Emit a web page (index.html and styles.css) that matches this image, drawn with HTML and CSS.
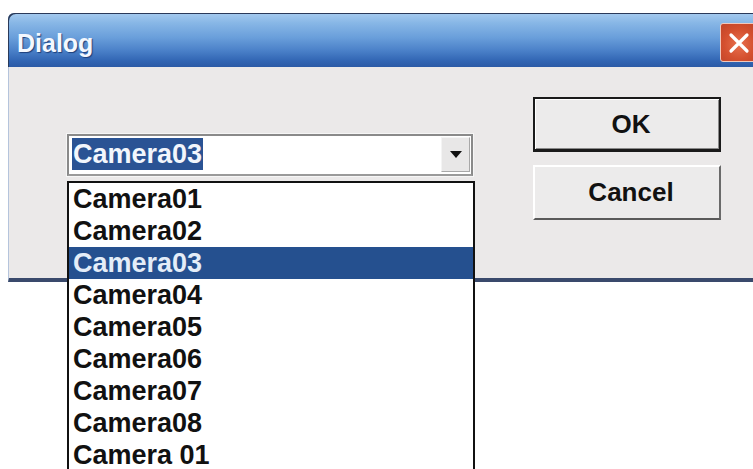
FILE: index.html
```html
<!DOCTYPE html>
<html lang="en">
<head>
<meta charset="utf-8">
<title>Dialog</title>
<link rel="stylesheet" href="styles.css">
</head>
<body>
<div class="screen">
  <div class="window">
    <div class="titlebar">
      <span class="title">Dialog</span>
      <span class="close" aria-label="Close">
        <svg width="22" height="22" viewBox="0 0 22 22"><path d="M3 3 L19 19 M19 3 L3 19" stroke="#fff" stroke-width="3.2" stroke-linecap="round"/></svg>
      </span>
    </div>
    <div class="client">
      <div class="combo-col">
        <div class="combo">
          <span class="combo-text"><span class="sel">Camera03</span></span>
          <span class="combo-btn">
            <svg width="12" height="8" viewBox="0 0 12 8"><path d="M0 0 H12 L6 7 Z" fill="#111"/></svg>
          </span>
          <ul class="droplist">
            <li>Camera01</li>
            <li>Camera02</li>
            <li class="active">Camera03</li>
            <li>Camera04</li>
            <li>Camera05</li>
            <li>Camera06</li>
            <li>Camera07</li>
            <li>Camera08</li>
            <li>Camera 01</li>
          </ul>
        </div>
      </div>
      <div class="buttons">
        <button class="btn default">OK</button>
        <button class="btn">Cancel</button>
      </div>
    </div>
  </div>
</div>
</body>
</html>
```

FILE: styles.css
```css
html, body {
  margin: 0;
  height: 469px;
  overflow: hidden;
  background: #ffffff;
}

.screen {
  padding: 13px 0 0 8px;
}

.window {
  width: 750px;
  font-family: "Liberation Sans", Arial, sans-serif;
}

/* caption bar */
.titlebar {
  height: 54px;
  display: flex;
  align-items: flex-start;
  border-top-left-radius: 6px;
  background: linear-gradient(to bottom,
    #a6cbef 0%,
    #88b7e6 18%,
    #6a9fdb 45%,
    #4a80c8 70%,
    #3266b4 88%,
    #2b5aa6 100%);
  box-shadow: inset 2px 2px 0 -1px #2a3a5a;
}

.title {
  padding: 18px 0 0 9px;
  font-weight: bold;
  font-size: 25px;
  line-height: 25px;
  color: #f4f8ff;
  text-shadow: 1px 1px 1px #1d3f7a;
}

.close {
  margin: 10px 0 0 auto;
  width: 38px;
  height: 39px;
  box-sizing: border-box;
  display: flex;
  align-items: center;
  justify-content: center;
  border: 1px solid #f0c8bc;
  border-radius: 3px;
  background: radial-gradient(circle at 50% 55%, #e8704e 0%, #d4502f 55%, #c04428 100%);
}

/* dialog client area */
.client {
  height: 211px;
  display: flex;
  background: #ebe9e9;
  border-left: 1px solid #b5c4dc;
  border-bottom: 4px solid #3a4a6c;
}

.combo-col {
  padding: 67px 0 0 58px;
}

.combo {
  position: relative;
  width: 406px;
  height: 42px;
  box-sizing: border-box;
  display: flex;
  background: #ffffff;
  border: 2px solid #8a8a8a;
  border-bottom-color: #9a9a9a;
  box-shadow: 0 0 0 1px #f6f6f6;
}

.combo-text {
  flex: 1;
  padding: 2px 0 0 3px;
}

.sel {
  display: inline-block;
  padding: 0 1px;
  background: #2a5394;
  color: #f2f6fc;
  font-weight: bold;
  font-size: 27px;
  line-height: 32px;
}

.combo-btn {
  width: 29px;
  height: 35px;
  margin: 1px 1px 0 0;
  box-sizing: border-box;
  display: flex;
  align-items: center;
  justify-content: center;
  background: #e8e7e7;
  border: 1px solid;
  border-color: #f4f4f4 #a8a8a8 #a8a8a8 #f4f4f4;
}

/* open drop-down list, drawn over the dialog */
.droplist {
  position: absolute;
  top: 45px;
  left: -2px;
  width: 408px;
  box-sizing: border-box;
  margin: 0;
  padding: 0;
  list-style: none;
  background: #ffffff;
  border: 2px solid #111111;
  border-bottom: none;
  z-index: 2;
}

.droplist li {
  height: 32px;
  padding-left: 4px;
  font-weight: bold;
  font-size: 27px;
  line-height: 32px;
  color: #111111;
}

.droplist li.active {
  background: #25508f;
  color: #e4edf8;
}

/* command buttons */
.buttons {
  display: flex;
  flex-direction: column;
  gap: 13px;
  padding: 30px 0 0 60px;
}

.btn {
  width: 188px;
  height: 55px;
  box-sizing: border-box;
  font-family: "Liberation Sans", Arial, sans-serif;
  font-weight: bold;
  font-size: 26px;
  color: #111111;
  background: #ecebeb;
  border: 2px solid;
  border-color: #ffffff #6a6a6a #5a5a5a #ffffff;
  padding: 0 0 0 8px;
}

.btn.default {
  border: 2px solid #1a1a1a;
  border-bottom-width: 3px;
  box-shadow: inset 1px 1px 0 #ffffff, inset -1px -1px 0 #8a8a8a;
}
```
